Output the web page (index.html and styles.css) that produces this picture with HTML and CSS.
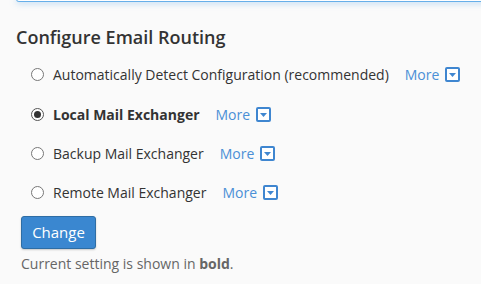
FILE: index.html
```html
<!DOCTYPE html>
<html>
<head>
<meta charset="utf-8">
<link rel="stylesheet" href="styles.css">
</head>
<body>
<div class="topbox"></div>
<div class="section">
  <h2 class="title">Configure Email Routing</h2>
  <div class="options">
    <div class="row">
      <label class="opt"><input type="radio" name="r"><span>Automatically Detect Configuration (recommended)</span></label>
      <a class="more">More <span class="caret"><svg width="11" height="11" viewBox="0 0 11 11"><path d="M2 4h7l-3.5 4z" fill="#3f86d0"/></svg></span></a>
    </div>
    <div class="row">
      <label class="opt"><input type="radio" name="r" checked><span class="bold">Local Mail Exchanger</span></label>
      <a class="more">More <span class="caret"><svg width="11" height="11" viewBox="0 0 11 11"><path d="M2 4h7l-3.5 4z" fill="#3f86d0"/></svg></span></a>
    </div>
    <div class="row">
      <label class="opt"><input type="radio" name="r"><span>Backup Mail Exchanger</span></label>
      <a class="more">More <span class="caret"><svg width="11" height="11" viewBox="0 0 11 11"><path d="M2 4h7l-3.5 4z" fill="#3f86d0"/></svg></span></a>
    </div>
    <div class="row">
      <label class="opt"><input type="radio" name="r"><span>Remote Mail Exchanger</span></label>
      <a class="more">More <span class="caret"><svg width="11" height="11" viewBox="0 0 11 11"><path d="M2 4h7l-3.5 4z" fill="#3f86d0"/></svg></span></a>
    </div>
  </div>
  <button class="btn">Change</button>
  <p class="note">Current setting is shown in <b>bold</b>.</p>
</div>
</body>
</html>
```
FILE: styles.css
```css
html, body {
  margin: 0;
  padding: 0;
  background: #fafafa;
  font-family: "Open Sans", sans-serif;
  color: #333;
  overflow: hidden;
}
.topbox {
  height: 2px;
  margin-top: -1px;
  margin-left: 16px;
  margin-right: -20px;
  border: 1px solid #66afe9;
  border-top: none;
  border-radius: 0 0 0 3px;
  box-shadow: 0 1px 6px rgba(102, 175, 233, 0.6);
  background: #fff;
}
.section {
  padding-left: 16px;
}
.title {
  margin: 22px 0 0 0;
  font-size: 18px;
  font-weight: 600;
  line-height: 26px;
  color: #333;
}
.options {
  margin-top: 5px;
  display: flex;
  flex-direction: column;
}
.row {
  display: flex;
  align-items: center;
  height: 39.4px;
  padding-left: 15px;
  font-size: 14px;
}
.opt {
  display: flex;
  align-items: center;
}
.opt input {
  -webkit-appearance: none;
  appearance: none;
  margin: 0 9px 0 0;
  width: 13px;
  height: 13px;
  border: 1px solid #777;
  border-radius: 50%;
  background: #fff;
  box-sizing: border-box;
  display: flex;
  align-items: center;
  justify-content: center;
}
.opt input:checked {
  border-color: #555;
}
.opt input:checked::after {
  content: "";
  width: 7px;
  height: 7px;
  border-radius: 50%;
  background: #333;
}
.bold {
  font-weight: 700;
}
.more {
  margin-left: 16px;
  color: #4a8fd6;
  display: flex;
  align-items: center;
  font-size: 14px;
}
.caret {
  margin-left: 6px;
  width: 11px;
  height: 11px;
  border: 2px solid #3f86d0;
  border-radius: 2px;
  background: #fff;
  display: inline-flex;
}
.btn {
  margin: 3px 0 0 5px;
  width: 75px;
  height: 33px;
  background: #3a87d0;
  border: 1px solid #2e6da4;
  border-radius: 3px;
  color: #fff;
  font-family: "Open Sans", sans-serif;
  font-size: 15px;
  box-shadow: 0 1px 2px rgba(0,0,0,0.2);
  padding: 0;
}
.note {
  margin: 5px 0 0 5px;
  font-size: 14px;
  color: #666;
}
```
